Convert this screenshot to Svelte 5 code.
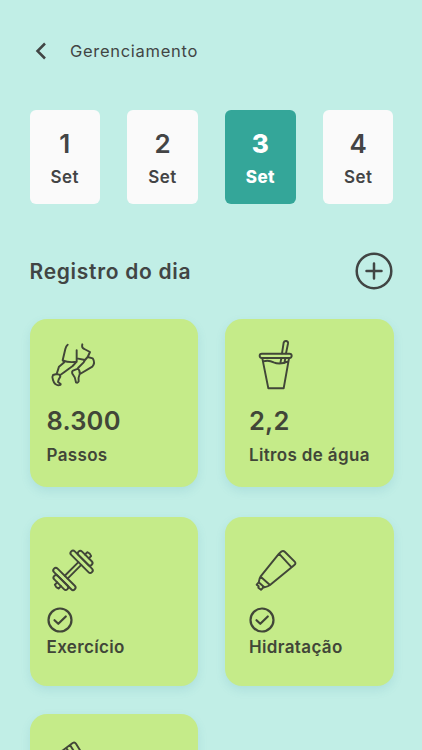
<script lang="ts">
  type Icon = 'run' | 'cup' | 'dumbbell' | 'tube' | 'ruler';
  type Card = { icon: Icon; value?: string; label: string; right?: boolean };

  const days = [1, 2, 3, 4];
  let selected = $state(3);

  const rows: Card[][] = [
    [
      { icon: 'run', value: '8.300', label: 'Passos' },
      { icon: 'cup', value: '2,2', label: 'Litros de água', right: true },
    ],
    [
      { icon: 'dumbbell', label: 'Exercício' },
      { icon: 'tube', label: 'Hidratação', right: true },
    ],
    [{ icon: 'ruler', label: '' }],
  ];
</script>

{#snippet picture(icon: Icon)}
  {#if icon === 'run'}
    <svg class="icon" viewBox="0 0 180 180">
      <path d="M68 29Q63 33 61 42L53 76Q73 84 95 80V46M112 28Q109 39 118 42L135 51Q131 60 128 66L143 70Q152 84 142 95L105 117M128 66L120 75L96 70M120 75L116 82L99 99M95 80L83 93L46 120M55 79L58 82L42 95L35 117M35 117L24 120Q20 126 24 135Q28 149 40 151Q48 151 47 147L39 141Q41 132 46 125L43 119ZM84 107L99 101Q106 108 104 117Q99 129 101 139Q98 145 93 142Q91 126 82 116Q80 109 84 107Z" />
    </svg>
  {:else if icon === 'cup'}
    <svg class="icon" viewBox="90 75 180 180">
      <rect x="134" y="131" width="96" height="13" rx="6.500" />
      <path d="M142 145L160 235H206L222 145M145 154Q161 149 176 157Q195 165 220 154M201 130L206 98Q208 92 214 93Q220 94 219 101L213 130M199 145L196 159M211 145L208 159" />
    </svg>
  {:else if icon === 'dumbbell'}
    <svg class="icon" viewBox="0 0 180 180">
      <g transform="translate(84 91) rotate(45)">
        <rect x="-44" y="-44" width="88" height="15" rx="7.500" />
        <rect x="-44" y="29" width="88" height="15" rx="7.500" />
        <rect x="-28" y="-59" width="56" height="15" rx="7.500" />
        <rect x="-28" y="44" width="56" height="15" rx="7.500" />
        <path d="M-6-29V29M6-29V29M-8-59V-69Q0-73 8-69V-59M-8 59V69Q0 73 8 69V59" />
      </g>
    </svg>
  {:else if icon === 'tube'}
    <svg class="icon" viewBox="90 90 180 180">
      <path d="M192 131L200 124Q205 121 210 126L239 155Q244 160 238 165L230 172ZM192 131L137 199Q133 204 131 218M230 172L166 224Q160 229 148 232M137 200L165 225M131 217L148 232M131 217L125 224L131 229L130 233L138 239L143 235L144 230" />
    </svg>
  {:else}
    <svg class="icon" viewBox="75 105 180 180">
      <path d="M101 170L127 149L158 126Q164 122 168 128L196 174M150 132L172 167M139 141L158 171M127 149L143 175" />
    </svg>
  {/if}
{/snippet}

<main class="page">
  <header class="header">
    <button class="back" aria-label="Voltar">
      <svg width="12" height="18" viewBox="0 0 12 18">
        <path d="M10 1.500L2.500 9L10 16.500" />
      </svg>
    </button>
    <span class="title">Gerenciamento</span>
  </header>

  <div class="days">
    {#each days as day}
      <button class="day" class:active={day === selected} onclick={() => (selected = day)}>
        <span class="number">{day}</span>
        <span class="month">Set</span>
      </button>
    {/each}
  </div>

  <div class="section">
    <h2>Registro do dia</h2>
    <button class="add" aria-label="Adicionar">
      <svg width="38" height="38" viewBox="0 0 38 38">
        <circle cx="19" cy="19" r="17.300" />
        <path d="M19 11.500V26.500M11.500 19H26.500" />
      </svg>
    </button>
  </div>

  <div class="cards">
    {#each rows as row}
      <div class="row">
        {#each row as card}
          <article class="card" class:right={card.right} class:task={!card.value}>
            {@render picture(card.icon)}
            {#if card.value}
              <strong class="value">{card.value}</strong>
            {:else}
              <svg class="check" width="26" height="26" viewBox="0 0 26 26">
                <circle cx="13" cy="13" r="11.500" />
                <path d="M7.500 13.200L11.300 16.800L18.800 9.500" />
              </svg>
            {/if}
            <span class="label">{card.label}</span>
          </article>
        {/each}
      </div>
    {/each}
  </div>
</main>

<style>
  :global(body) {
    background: #c1eee6;
    overflow: hidden;
  }
  .page {
    box-sizing: border-box;
    height: 750px;
    padding: 36px 28.500px 0 29.500px;
    overflow: hidden;
    background: #c1eee6;
    color: #414544;
    font-family: Inter, 'Liberation Sans', sans-serif;
  }
  button {
    padding: 0;
    border: 0;
    background: transparent;
    color: inherit;
    font: inherit;
    cursor: pointer;
  }
  svg {
    display: block;
    fill: none;
    stroke: currentColor;
    stroke-width: 2.500;
    stroke-linecap: round;
    stroke-linejoin: round;
  }
  .header {
    display: flex;
    align-items: center;
    height: 30px;
  }
  .back {
    width: 40.500px;
    padding-left: 5.500px;
  }
  .back svg {
    stroke-linecap: butt;
    stroke-linejoin: miter;
  }
  .title {
    font-size: 16.500px;
    letter-spacing: 0.7px;
  }
  .days {
    display: grid;
    grid-template-columns: repeat(4, 70.500px);
    justify-content: space-between;
    margin-top: 43.500px;
  }
  .day {
    display: flex;
    flex-direction: column;
    align-items: center;
    height: 94.500px;
    padding-top: 18px;
    border-radius: 6px;
    background: #fafafa;
    color: #434445;
    font-weight: 600;
  }
  .day.active {
    background: #34a699;
    color: #fff;
    font-weight: 800;
  }
  .number {
    font-size: 26px;
    line-height: 32px;
  }
  .month {
    margin-top: 5px;
    font-size: 17px;
    line-height: 24px;
    letter-spacing: 0.5px;
  }
  .section {
    display: flex;
    align-items: center;
    justify-content: space-between;
    height: 38px;
    margin-top: 48px;
    padding-right: 1px;
  }
  h2 {
    margin: 0;
    font-size: 21px;
    font-weight: 600;
    letter-spacing: 0.7px;
  }
  .cards {
    display: flex;
    flex-direction: column;
    gap: 28px;
    margin-top: 28.500px;
  }
  .row {
    display: flex;
    justify-content: space-between;
  }
  .row:first-child {
    margin-bottom: 2px;
  }
  .card {
    box-sizing: border-box;
    display: flex;
    flex-direction: column;
    width: 168.500px;
    height: 168.500px;
    padding: 16px 0 0 17px;
    border-radius: 17px;
    background: #c5eb89;
    box-shadow: 0 4px 10px rgba(70, 150, 170, 0.15);
    color: #414638;
  }
  .card.right {
    padding-left: 24px;
  }
  .card.task {
    padding-top: 22.500px;
  }
  .icon {
    width: 60px;
    height: 60px;
    margin-left: -2px;
    stroke-width: 5.800;
  }
  .right .icon {
    margin-left: -4px;
  }
  .value {
    margin-top: 10px;
    font-size: 25.500px;
    font-weight: 600;
    line-height: 32px;
    letter-spacing: 0.2px;
  }
  .label {
    margin-top: 6px;
    font-size: 17px;
    font-weight: 600;
    line-height: 24px;
    letter-spacing: 0.35px;
    white-space: nowrap;
  }
  .check {
    margin-top: 7px;
    stroke-width: 2.200;
  }
  .task .label {
    margin-top: 2px;
  }
</style>
